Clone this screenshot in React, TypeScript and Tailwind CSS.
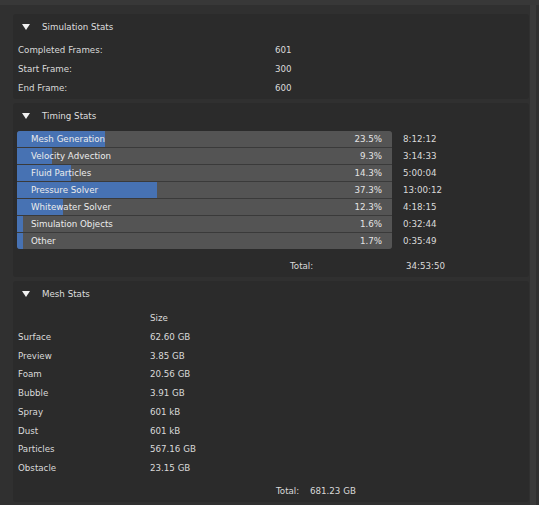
import React from "react";

const font = { fontFamily: '"DejaVu Sans", "Liberation Sans", sans-serif' };

function Header({ title }: { title: string }) {
  return (
    <div className="h-[24px] pt-[2px] flex items-center">
      <svg width="8" height="6" viewBox="0 0 8 6" className="ml-[9px]">
        <polygon points="0,0 8,0 4,6" fill="#f0f0f0" />
      </svg>
      <span className="ml-[12px] text-[#dedede]">{title}</span>
    </div>
  );
}

const timing = [
  ["Mesh Generation", 23.5, "8:12:12"],
  ["Velocity Advection", 9.3, "3:14:33"],
  ["Fluid Particles", 14.3, "5:00:04"],
  ["Pressure Solver", 37.3, "13:00:12"],
  ["Whitewater Solver", 12.3, "4:18:15"],
  ["Simulation Objects", 1.6, "0:32:44"],
  ["Other", 1.7, "0:35:49"],
] as const;

const mesh = [
  ["Surface", "62.60 GB"],
  ["Preview", "3.85 GB"],
  ["Foam", "20.56 GB"],
  ["Bubble", "3.91 GB"],
  ["Spray", "601 kB"],
  ["Dust", "601 kB"],
  ["Particles", "567.16 GB"],
  ["Obstacle", "23.15 GB"],
];

export default function App() {
  return (
    <div
      className="w-[539px] h-[505px] bg-[#303030] relative overflow-hidden text-[8.7px] leading-none"
      style={font}
    >
      <div className="absolute left-0 top-0 w-[539px] h-[5px] bg-[#383838]" />
      <div className="absolute left-[530px] top-[5px] w-[6px] h-[500px] bg-[#3a3a3a]" />
      <div className="flex flex-col gap-[4px] pt-[14px] pl-[13px] w-[529px]">
        {/* Simulation Stats */}
        <div className="bg-[#2b2b2b] rounded-[3px] h-[85px] flex flex-col">
          <Header title="Simulation Stats" />
          <div className="mt-[3px] flex flex-col text-[#dadada]">
            {[
              ["Completed Frames:", "601"],
              ["Start Frame:", "300"],
              ["End Frame:", "600"],
            ].map(([a, b]) => (
              <div key={a} className="h-[19px] flex items-center">
                <span className="pl-[5px] w-[262px]">{a}</span>
                <span>{b}</span>
              </div>
            ))}
          </div>
        </div>

        {/* Timing Stats */}
        <div className="bg-[#2b2b2b] rounded-[3px] h-[174px] flex flex-col">
          <Header title="Timing Stats" />
          <div className="mt-[4px] flex">
            <div className="ml-[4px] w-[375px] rounded-[3px] overflow-hidden bg-[#3a3a3a] flex flex-col gap-[1px]">
              {timing.map(([name, pct]) => (
                <div key={name} className="h-[16px] bg-[#545454] relative flex items-center">
                  <div
                    className="absolute left-0 top-0 h-full bg-[#4772b3]"
                    style={{ width: `${Math.max(pct, 1.1)}%` }}
                  />
                  <span className="relative pl-[14px] flex-1 text-[#ececec]">{name}</span>
                  <span className="relative pr-[10px] text-[#e4e4e4]">{pct}%</span>
                </div>
              ))}
            </div>
            <div className="ml-[11px] flex flex-col gap-[1px] text-[#dadada]">
              {timing.map(([name, , t]) => (
                <div key={name} className="h-[16px] flex items-center">
                  {t}
                </div>
              ))}
            </div>
          </div>
          <div className="mt-[8px] h-[18px] flex items-center text-[#dadada]">
            <span className="pl-[277px] w-[393px]">Total:</span>
            <span>34:53:50</span>
          </div>
        </div>

        {/* Mesh Stats */}
        <div className="bg-[#2b2b2b] rounded-[3px] h-[221px] flex flex-col">
          <Header title="Mesh Stats" />
          <div className="pt-[4px] flex flex-col text-[#dadada]">
            <div className="h-[18.75px] flex items-center">
              <span className="pl-[5px] w-[137px]"></span>
              <span>Size</span>
            </div>
            {mesh.map(([a, b]) => (
              <div key={a} className="h-[18.75px] flex items-center">
                <span className="pl-[5px] w-[137px]">{a}</span>
                <span>{b}</span>
              </div>
            ))}
          </div>
          <div className="mt-[5px] h-[18px] flex items-center text-[#dadada]">
            <span className="pl-[263px] w-[297px]">Total:</span>
            <span>681.23 GB</span>
          </div>
        </div>
      </div>
    </div>
  );
}
